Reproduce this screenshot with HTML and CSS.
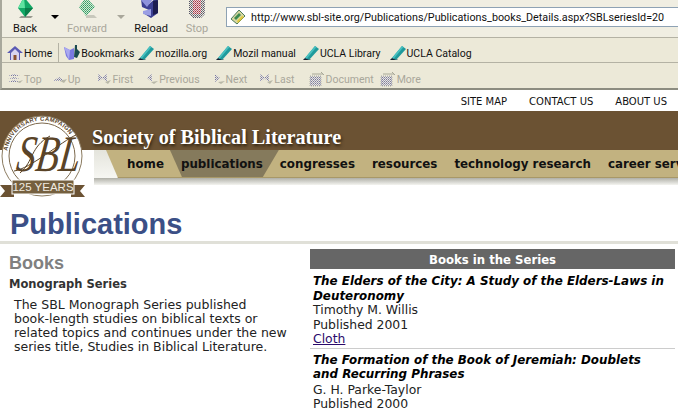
FILE: index.html
```html
<!DOCTYPE html>
<html>
<head>
    <title>Publications - Society of Biblical Literature</title>
    <link rel="stylesheet" href="styles.css">
</head>
<body>
    <svg class="defs" width="0" height="0">
        <defs>
            <pattern id="dither" width="2" height="2" patternUnits="userSpaceOnUse">
                <rect width="2" height="2" fill="#ece9d8"/>
                <rect width="1" height="1" fill="#7878a4"/>
                <rect x="1" y="1" width="1" height="1" fill="#9c9cbc"/>
            </pattern>
            <pattern id="dither-dark" width="2" height="2" patternUnits="userSpaceOnUse">
                <rect width="2" height="2" fill="#ece9d8"/>
                <rect width="1" height="1" fill="#55556a"/>
                <rect x="1" y="1" width="1" height="1" fill="#77778a"/>
            </pattern>
            <pattern id="dither-red" width="2" height="2" patternUnits="userSpaceOnUse">
                <rect width="2" height="2" fill="#e8d8d8"/>
                <rect width="1" height="1" fill="#a83040"/>
                <rect x="1" y="1" width="1" height="1" fill="#c06070"/>
            </pattern>
            <pattern id="dither-green" width="2" height="2" patternUnits="userSpaceOnUse">
                <rect width="2" height="2" fill="#d8e8d0"/>
                <rect width="1" height="1" fill="#2a9a68"/>
                <rect x="1" y="1" width="1" height="1" fill="#50b080"/>
            </pattern>
            <symbol id="pen" viewBox="0 0 16 16">
                <path d="M0 15 L8 15 L6 13 Z" fill="#777"/>
                <path d="M2 13 L12 1 L16 4 L6 15 Z" fill="#1f9a9c"/>
                <path d="M2 13 L12 1 L13.5 2 L3.5 14 Z" fill="#48c0c0"/>
                <path d="M2 13 L0 15 L5 15 L6 15 Z" fill="#123"/>
            </symbol>
            <symbol id="go-top" viewBox="0 0 16 12">
                <path d="M1 3 L7 1 L13 3 Z M1 6 L7 4 L13 6 Z M1 9 L7 7 L13 9 Z" fill="url(#dither)"/>
                <path d="M10 9 L16 7 L13 10 Z" fill="#b8b8a8"/>
            </symbol>
            <symbol id="go-up" viewBox="0 0 14 12">
                <path d="M0 8 L6 4 L12 8 Z" fill="url(#dither)"/>
                <path d="M7 8 L14 6 L11 10 Z" fill="#b8b8a8"/>
            </symbol>
            <symbol id="go-end" viewBox="0 0 14 12">
                <path d="M1 1 L6 5 L1 9 Z M10 1 L5 5 L10 9 Z" fill="url(#dither)"/>
                <path d="M8 9 L14 7 L11 11 Z" fill="#b8b8a8"/>
            </symbol>
            <symbol id="doc" viewBox="0 0 16 16">
                <path d="M1 5 H12 V15 H1 Z" fill="url(#dither)"/>
                <path d="M3 3 H14 M12 1 L15 4" stroke="#a8a898" fill="none"/>
                <path d="M1 5 H12 V15 H1 Z" fill="none" stroke="#b0b0a8" stroke-dasharray="1 1"/>
            </symbol>
        </defs>
    </svg>

    <div class="browser">
        <div class="nav-bar">
            <div class="nav-btn back">
                <svg width="20" height="20" viewBox="0 0 20 20"><path d="M4 19 H16 L18 17 H6 Z" fill="#9a9a90"/><path d="M9 -2 L18 9 L10 18 L3 9 Z" fill="#12a765"/><path d="M9 -2 L10 9 L3 9 Z" fill="#5fe3a0"/><path d="M10 9 L18 9 L10 18 Z" fill="#0a7f4a"/></svg>
                <span>Back</span>
            </div>
            <div class="marker"></div>
            <div class="nav-btn off forward">
                <svg width="20" height="20" viewBox="0 0 20 20"><path d="M9 19 H20 L17 16 H9 Z" fill="#c8c8bc"/><path d="M9 -2 L18 8 L9 17 L2 8 Z" fill="url(#dither-green)"/></svg>
                <span>Forward</span>
            </div>
            <div class="marker off"></div>
            <div class="nav-btn reload">
                <svg width="24" height="20" viewBox="0 0 24 20"><path d="M2 0 L10 5 L18 -2 L19 14 L12 19 L4 14 L10 11 L3 8 Z" fill="#3c3f93"/><path d="M1 0 H14 L8 8 Z" fill="#8e92dc"/><path d="M4 12 L12 10 L12 17 L4 15 Z" fill="#9a9ee4"/><path d="M14 2 L19 1 L19 14 L14 16 Z" fill="#1c1c50"/></svg>
                <span>Reload</span>
            </div>
            <div class="nav-btn off stop">
                <svg width="20" height="20" viewBox="0 0 20 20"><path d="M2 -2 H18 V15 L14 19 H6 L2 15 Z" fill="url(#dither-dark)"/><path d="M6 0 H14 V15 H6 Z" fill="url(#dither-red)"/></svg>
                <span>Stop</span>
            </div>
            <div class="url-box">
                <svg width="16" height="16" viewBox="0 0 16 16"><path d="M1 10 L9 1 L15 7 L7 15 Z" fill="#d8d8a0" stroke="#4a7a5a"/><path d="M4 9 L9 4 L11 6 L6 11 Z" fill="#3c8a50"/><path d="M7 12 L12 7 L14 8 L8 14 Z" fill="#e2c83c"/></svg>
                <span>http://www.sbl-site.org/Publications/Publications_books_Details.aspx?SBLseriesId=20</span>
            </div>
        </div>

        <div class="bm-bar">
            <div class="bm home">
                <svg width="16" height="16" viewBox="0 0 16 16"><path d="M8 1 L16 8 L13 8 V15 H3 V8 H0 Z" fill="#5a5ab4"/><path d="M4 8 L8 4 L12 8 V15 H4 Z" fill="#d8d4f0"/><rect x="6.500" y="10" width="3" height="5" fill="#8a5030"/></svg>
                <span>Home</span>
            </div>
            <div class="bm-sep"></div>
            <div class="bm bookmarks">
                <svg width="17" height="16" viewBox="0 0 17 16"><path d="M0 2 L6 5 L10 3 V14 L5 15 L2 11 Z" fill="#7a78e0"/><path d="M11 0 L13 0 L13 4 L16 7 L13 13 L10 12 Z" fill="#1b4a50"/><path d="M0 2 L6 5 L5 15 Z" fill="#a9a8f0"/></svg>
                <span>Bookmarks</span>
            </div>
            <div class="bm"><svg width="16" height="16"><use href="#pen"/></svg><span>mozilla.org</span></div>
            <div class="bm wide"><svg width="16" height="16"><use href="#pen"/></svg><span>Mozil manual</span></div>
            <div class="bm"><svg width="16" height="16"><use href="#pen"/></svg><span>UCLA Library</span></div>
            <div class="bm wide"><svg width="16" height="16"><use href="#pen"/></svg><span>UCLA Catalog</span></div>
        </div>

        <div class="site-bar">
            <div class="site-item"><svg width="16" height="12"><use href="#go-top"/></svg><span>Top</span></div>
            <div class="site-item up"><svg width="14" height="12"><use href="#go-up"/></svg><span>Up</span></div>
            <div class="site-item first"><svg width="14" height="12"><use href="#go-end"/></svg><span>First</span></div>
            <div class="site-item nudge"><svg width="12" height="12" viewBox="0 0 12 12"><path d="M6 1 L1 5 L6 9 Z" fill="url(#dither)"/><path d="M5 9 L12 8 L8 11 Z" fill="#b8b8a8"/></svg><span>Previous</span></div>
            <div class="site-item nudge"><svg width="12" height="12" viewBox="0 0 12 12"><path d="M2 1 L7 5 L2 9 Z" fill="url(#dither)"/><path d="M5 9 L12 8 L8 11 Z" fill="#b8b8a8"/></svg><span>Next</span></div>
            <div class="site-item"><svg width="14" height="12"><use href="#go-end"/></svg><span>Last</span></div>
            <div class="site-item document"><svg width="16" height="16"><use href="#doc"/></svg><span>Document</span></div>
            <div class="site-item more"><svg width="16" height="16"><use href="#doc"/></svg><span>More</span></div>
        </div>
    </div>

    <div class="top-links">
        <a>SITE MAP</a>
        <a>CONTACT US</a>
        <a>ABOUT US</a>
    </div>

    <div class="banner">
        <svg class="logo" width="86" height="90" viewBox="0 0 86 90">
            <defs>
                <path id="ring" d="M7.400 40 A35 35 0 0 1 71 25"/>
            </defs>
            <circle cx="42" cy="45" r="40" fill="#fff" stroke="#8b7b60"/>
            <circle cx="42" cy="45" r="33" fill="#fff" stroke="#7d6a4e"/>
            <text class="logo-ring"><textPath href="#ring" textLength="82">ANNIVERSARY CAMPAIGN</textPath></text>
            <path d="M14 60 C30 58 62 30 76 24 M20 62 C34 50 30 36 50 25" fill="none" stroke="#5a4428"/>
            <text class="logo-sbl" transform="translate(47 60) scale(1 1.350) skewX(-10)" text-anchor="middle">SBL</text>
            <path d="M0 74 H14 V86 H0 L5 80 Z M85 74 H71 V86 H85 L80 80 Z" fill="#6b5233"/>
            <rect x="12" y="69" width="62" height="14" fill="#75603f" stroke="#fff"/>
            <text class="logo-years" x="43" y="80" text-anchor="middle">125 YEARS</text>
        </svg>
        <div class="banner-title">Society of Biblical Literature</div>
        <div class="menu-wrap">
            <div class="menu">
                <a class="menu-home">home</a>
                <a class="menu-active">publications</a>
                <a>congresses</a>
                <a>resources</a>
                <a>technology research</a>
                <a>career services</a>
            </div>
            <div class="menu-shadow"></div>
        </div>
    </div>

    <h1 class="page-title">Publications</h1>
    <div class="rule"></div>

    <div class="content">
        <div class="left-col">
            <h2>Books</h2>
            <h3>Monograph Series</h3>
            <p>The SBL Monograph Series published<br>book-length studies on biblical texts or related topics and continues under the new series title, Studies in Biblical Literature.</p>
        </div>
        <div class="right-col">
            <div class="col-head">Books in the Series</div>
            <div class="book">
                <em>The Elders of the City: A Study of the Elders-Laws in Deuteronomy</em>
                <div>Timothy M. Willis</div>
                <div>Published 2001</div>
                <a>Cloth</a>
            </div>
            <div class="book">
                <em>The Formation of the Book of Jeremiah: Doublets and Recurring Phrases</em>
                <div>G. H. Parke-Taylor</div>
                <div>Published 2000</div>
            </div>
        </div>
    </div>
</body>
</html>
```

FILE: styles.css
```css
html, body {
    margin: 0;
    padding: 0;
    height: 410px;
    overflow: hidden;
    background: white;
    font-family: "DejaVu Sans", Verdana, sans-serif;
}
.defs {
    position: absolute;
}
.browser {
    background: #ece9d8;
    border-left: 2px solid #a8a89c;
    border-bottom: 2px solid #8c8c80;
    font-family: Roboto, Tahoma, sans-serif;
    font-size: 10.500px;
    color: #111;
}
.nav-bar {
    height: 37px;
    display: flex;
    border-bottom: 1px solid #b4b2a4;
    background: #f0eee2;
    overflow: hidden;
}
.nav-btn {
    display: flex;
    flex-direction: column;
    align-items: center;
    width: 40px;
    margin-top: -2px;
    font-size: 11px;
    line-height: 14px;
    flex: none;
}
.nav-btn svg {
    height: 22px;
    margin-bottom: 2px;
}
.nav-btn.back {
    margin-left: 3px;
}
.nav-btn.forward {
    margin-left: 5px;
    width: 46px;
}
.nav-btn.reload {
    margin-left: 6px;
}
.nav-btn.stop {
    margin-left: 10px;
    width: 32px;
}
.off {
    color: #a9a79b;
}
.marker {
    width: 0;
    height: 0;
    margin: 15px 0 0 6px;
    border: 4px solid transparent;
    border-top: 4px solid #000;
    border-bottom: 0;
    flex: none;
}
.marker.off {
    margin-left: 7px;
    border-top-color: #a9a79b;
}
.url-box {
    margin: 7px 0 0 13px;
    flex: 1;
    height: 20px;
    box-sizing: border-box;
    border: 1px solid #8ea2b4;
    border-right: 0;
    background: white;
    display: flex;
    align-items: center;
    padding-left: 3px;
    gap: 5px;
    font-size: 10.750px;
    white-space: nowrap;
}
.bm-bar {
    height: 25px;
    box-sizing: border-box;
    padding: 6px 0 0 5px;
    display: flex;
    align-items: center;
    gap: 7px;
    border-bottom: 1px solid #b4b2a4;
}
.bm {
    display: flex;
    align-items: center;
    gap: 1px;
    white-space: nowrap;
}
.bm.home {
    margin-right: -1px;
}
.bm.bookmarks {
    gap: 0;
    margin-right: -3px;
}
.bm.wide {
    margin-left: 2px;
}
.bm-sep {
    width: 1px;
    height: 20px;
    margin-right: -2px;
    background: #b4b2a4;
}
.site-bar {
    height: 25px;
    box-sizing: border-box;
    padding: 7px 0 0 5px;
    display: flex;
    align-items: center;
    gap: 12px;
    color: #a9a79b;
}
.site-item {
    display: flex;
    align-items: center;
    gap: 1px;
}
.site-item.up {
    margin-left: -1px;
}
.site-item.first {
    margin-left: 5px;
}
.site-item.nudge {
    margin-left: 1px;
}
.site-item.document {
    margin-left: 2px;
}
.site-item.more {
    margin-left: -6px;
}
.top-links {
    height: 21px;
    box-sizing: border-box;
    padding: 2px 11px 0 0;
    display: flex;
    justify-content: flex-end;
    align-items: center;
    gap: 22px;
    font-size: 10px;
    color: #111;
}
.banner {
    position: relative;
    height: 74px;
    background: linear-gradient(#6b5233 39px, white 39px);
}
.logo {
    position: absolute;
    left: 0;
    top: 0;
    z-index: 2;
}
.logo-ring {
    font: bold 6px "Liberation Sans", sans-serif;
    fill: #5a4428;
}
.logo-sbl {
    font: italic 38px "Liberation Serif", serif;
    fill: #5a4428;
}
.logo-years {
    font: 11.500px "Liberation Sans", sans-serif;
    fill: #f0ebe0;
}
.banner-title {
    height: 39px;
    box-sizing: border-box;
    padding: 15px 0 0 92px;
    font: bold 20.200px/22px "Liberation Serif", serif;
    color: white;
    text-shadow: 1px 2px 3px #2e2210;
}
.menu-wrap {
    margin-left: 94px;
    height: 35px;
    background: linear-gradient(#e4e4dc, #fbfbf8);
}
.menu {
    height: 28px;
    margin-left: 4px;
    background: #c2b280;
    border-bottom: 1px solid #a89868;
    box-sizing: border-box;
    clip-path: polygon(8px 0, 100% 0, 100% 100%, 20px 100%);
    display: flex;
    align-items: center;
    gap: 17px;
    padding-left: 29px;
    font-size: 11.850px;
    font-weight: bold;
    color: #111;
    white-space: nowrap;
}
.menu-active {
    background: #857a5c;
    margin: 0 -16px;
    padding: 0 16px;
    height: 100%;
    display: flex;
    align-items: center;
    clip-path: polygon(5px 0, 100% 0, calc(100% - 16px) 100%, 17px 100%);
}
.menu-shadow {
    height: 7px;
    background: linear-gradient(#b0b0a8, #f4f4f0);
}
.page-title {
    margin: 0;
    padding: 23px 0 0 10px;
    height: 56px;
    box-sizing: border-box;
    font: bold 29px/32px "Liberation Sans", Arial, sans-serif;
    color: #3b4f86;
}
.rule {
    height: 3px;
    background: #e0e0d8;
}
.content {
    display: flex;
    padding-top: 5px;
}
.left-col {
    width: 310px;
    flex: none;
}
.left-col h2 {
    margin: 3px 0 0 9px;
    font: bold 18px/22px "Liberation Sans", Arial, sans-serif;
    color: #808080;
}
.left-col h3 {
    margin: 2px 0 0 9px;
    font-size: 11.500px;
    line-height: 16px;
    color: #333;
}
.left-col p {
    margin: 6px 0 0 14px;
    width: 280px;
    font-size: 12.500px;
    line-height: 14px;
    color: #222;
}
.right-col {
    width: 365px;
    font-size: 12.400px;
    line-height: 14.500px;
    color: #222;
}
.col-head {
    height: 20px;
    line-height: 22px;
    background: #666;
    color: white;
    font-size: 11.700px;
    font-weight: bold;
    text-align: center;
}
.book {
    padding: 5px 7px 1px 3px;
    border-bottom: 1px solid #ccc;
}
.book + .book {
    padding-top: 4px;
    border-bottom: 0;
}
.book + .book em {
    margin-bottom: 1px;
}
.book em {
    display: block;
    font-size: 11.900px;
    font-weight: bold;
    color: #000;
}
.book a {
    color: #2a0a6b;
    text-decoration: underline;
}
```
